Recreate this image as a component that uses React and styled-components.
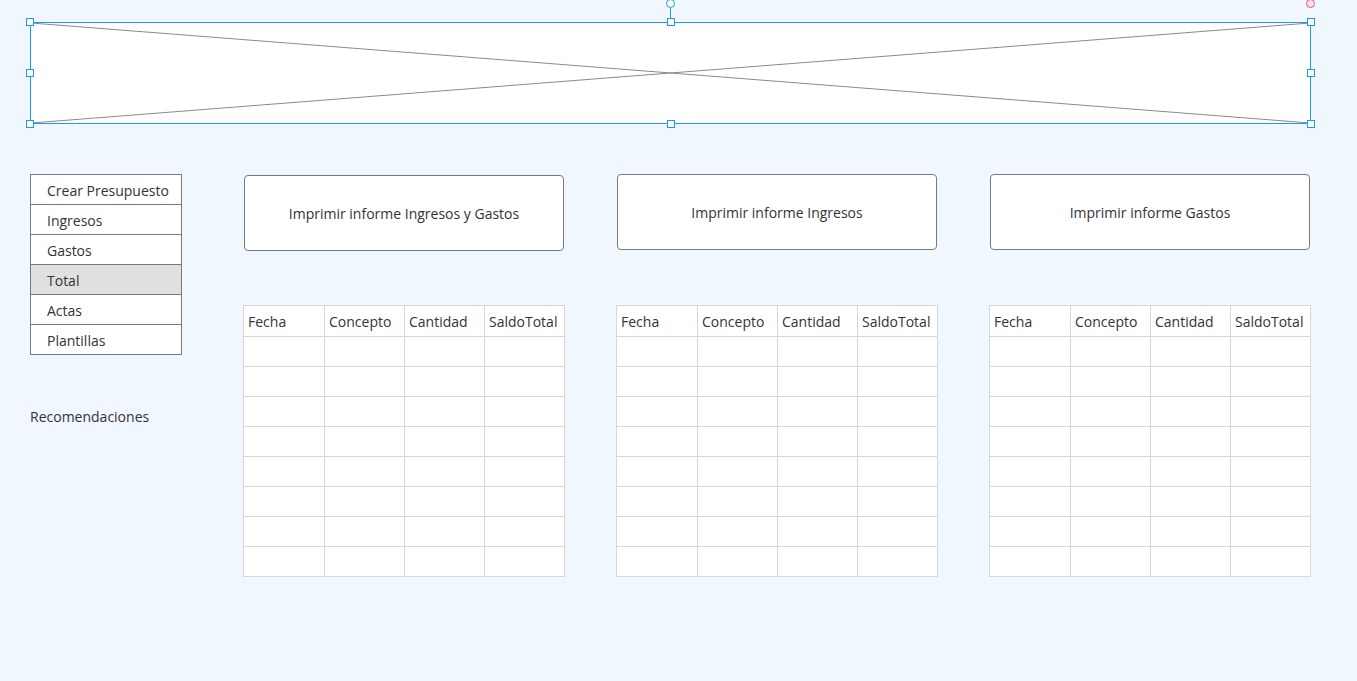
import React from 'react';
import styled, { createGlobalStyle } from 'styled-components';

const GlobalStyle = createGlobalStyle`
  html, body {
    margin: 0;
    padding: 0;
    background: #F0F7FE;
  }
  body {
    font-family: 'Open Sans', 'Noto Sans', sans-serif;
    color: #333333;
  }
`;

const menuItems = ['Crear Presupuesto', 'Ingresos', 'Gastos', 'Total', 'Actas', 'Plantillas'];
const reports = [
  { label: 'Imprimir informe Ingresos y Gastos', nudge: 1 },
  { label: 'Imprimir informe Ingresos', nudge: 0 },
  { label: 'Imprimir informe Gastos', nudge: 0 },
];
const headers = ['Fecha', 'Concepto', 'Cantidad', 'SaldoTotal'];
const ROWS = 8;

const handleSpots = [
  { x: 'left', y: 'top' },
  { x: 'center', y: 'top' },
  { x: 'right', y: 'top' },
  { x: 'left', y: 'middle' },
  { x: 'right', y: 'middle' },
  { x: 'left', y: 'bottom' },
  { x: 'center', y: 'bottom' },
  { x: 'right', y: 'bottom' },
];

const App = () => {
  return (
    <Page>
      <GlobalStyle />

      {/* Selected image placeholder */}
      <Banner>
        <Cross viewBox="0 0 100 100" preserveAspectRatio="none">
          <line x1="0" y1="0" x2="100" y2="100" vectorEffect="non-scaling-stroke" />
          <line x1="100" y1="0" x2="0" y2="100" vectorEffect="non-scaling-stroke" />
        </Cross>
        {handleSpots.map((h, i) => (
          <Handle key={i} $x={h.x} $y={h.y} />
        ))}
        <RotateStem />
        <RotateKnob />
        <CornerKnob />
      </Banner>

      <Workspace>
        <Sidebar>
          <Menu>
            {menuItems.map((item) => (
              <MenuItem key={item} $active={item === 'Total'}>{item}</MenuItem>
            ))}
          </Menu>
          <Note>Recomendaciones</Note>
        </Sidebar>

        {reports.map((r) => (
          <Column key={r.label}>
            <ReportButton $nudge={r.nudge}>{r.label}</ReportButton>
            <Grid>
              {headers.map((h) => (
                <HeadCell key={h}>{h}</HeadCell>
              ))}
              {Array.from({ length: ROWS * headers.length }).map((_, i) => (
                <Cell key={i} />
              ))}
            </Grid>
          </Column>
        ))}
      </Workspace>
    </Page>
  );
};

export default App;

// ============================================
// STYLES
// ============================================

const Page = styled.div`
  min-height: 100vh;
  box-sizing: border-box;
  padding: 22px 0 0 30px;
`;

const Banner = styled.div`
  position: relative;
  box-sizing: border-box;
  width: 1281px;
  height: 102px;
  background: #FFFFFF;
  border: 1px solid #1A9BEF;
`;

const Cross = styled.svg`
  display: block;
  width: 100%;
  height: 100%;

  line {
    stroke: #8A8A8A;
    stroke-width: 1;
  }
`;

const Handle = styled.span`
  position: absolute;
  box-sizing: border-box;
  width: 8px;
  height: 8px;
  background: #FFFFFF;
  border: 1px solid #1A9BEF;
  ${({ $x }) =>
    $x === 'left' ? 'left: -5px;' : $x === 'right' ? 'right: -5px;' : 'left: calc(50% - 4px);'}
  ${({ $y }) =>
    $y === 'top' ? 'top: -5px;' : $y === 'bottom' ? 'bottom: -5px;' : 'top: calc(50% - 4px);'}
`;

const RotateStem = styled.span`
  position: absolute;
  left: calc(50% - 1px);
  top: -15px;
  width: 1px;
  height: 10px;
  background: #1A9BEF;
`;

const RotateKnob = styled.span`
  position: absolute;
  box-sizing: border-box;
  left: calc(50% - 5px);
  top: -24px;
  width: 9px;
  height: 9px;
  border-radius: 50%;
  background: #FFFFFF;
  border: 1px solid #1A9BEF;
`;

const CornerKnob = styled.span`
  position: absolute;
  box-sizing: border-box;
  right: -5px;
  top: -24px;
  width: 9px;
  height: 9px;
  border-radius: 50%;
  background: #FFE3E8;
  border: 1px solid #F0506E;
`;

const Workspace = styled.div`
  display: grid;
  grid-template-columns: 162px repeat(3, 322px);
  column-gap: 51px;
  margin-top: 50px;
  align-items: start;
`;

const Sidebar = styled.aside`
  display: flex;
  flex-direction: column;
`;

const Menu = styled.nav`
  box-sizing: border-box;
  width: 152px;
  border: 1px solid #797979;
  background: #FFFFFF;
`;

const MenuItem = styled.div`
  height: 29px;
  line-height: 31px;
  padding-left: 16px;
  font-size: 14px;
  color: #333333;
  background: ${({ $active }) => ($active ? '#E0E0E0' : '#FFFFFF')};
  border-top: 1px solid #797979;

  &:first-child {
    border-top: none;
  }
`;

const Note = styled.p`
  margin: 52px 0 0 0;
  font-size: 14px;
  line-height: 20px;
  color: #333333;
`;

const Column = styled.section`
  display: grid;
  grid-template-rows: 131px auto;
`;

const ReportButton = styled.button`
  align-self: start;
  box-sizing: border-box;
  width: 320px;
  height: 76px;
  margin: ${({ $nudge }) => $nudge}px 1px 0 1px;
  background: #FFFFFF;
  border: 1px solid #797979;
  border-radius: 4px;
  font-family: 'Open Sans', 'Noto Sans', sans-serif;
  font-size: 14px;
  color: #333333;
  cursor: pointer;
`;

const Grid = styled.div`
  display: grid;
  grid-template-columns: 81px 80px 80px 80px;
  grid-auto-rows: 30px;
  grid-template-rows: 31px;
  box-sizing: border-box;
  width: 322px;
  border-right: 1px solid #D7D7D7;
  border-bottom: 1px solid #D7D7D7;
  background: #FFFFFF;
`;

const Cell = styled.div`
  box-sizing: border-box;
  border-left: 1px solid #D7D7D7;
  border-top: 1px solid #D7D7D7;
`;

const HeadCell = styled(Cell)`
  display: flex;
  align-items: center;
  padding-left: 4px;
  font-size: 14px;
  color: #333333;
  white-space: nowrap;
`;
